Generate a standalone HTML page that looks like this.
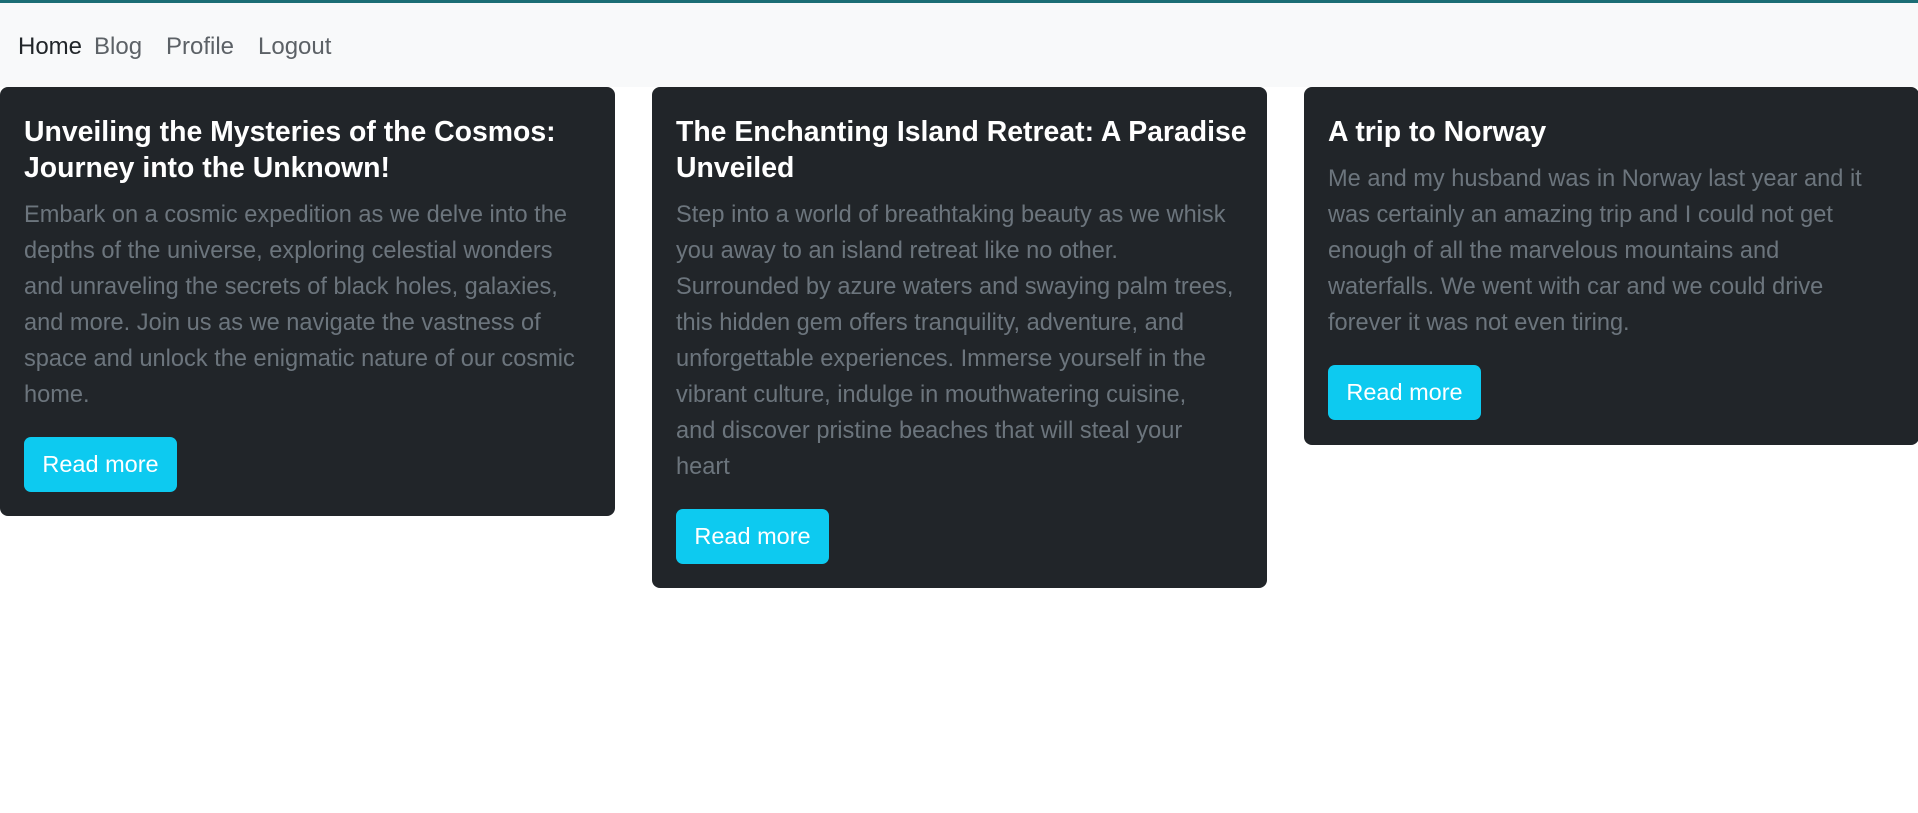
<!DOCTYPE html>
<html><head><meta charset="utf-8"><style>
*{margin:0;padding:0;box-sizing:border-box}
body{width:1918px;height:813px;background:#fff;font-family:"Liberation Sans",sans-serif;position:relative;overflow:hidden}
.top{position:absolute;left:0;top:0;width:1918px;height:3px;background:#1b6d75}
.nav{position:absolute;left:0;top:3px;width:1918px;height:84px;background:#f8f9fa}
.nav span{position:absolute;top:30px;font-size:24px;color:#5c6166}
.card{position:absolute;top:87px;width:615px;background:#212529;border-radius:8px}
.card h5{position:absolute;left:24px;top:27px;color:#fff;font-size:28.4px;font-weight:bold;line-height:36px;white-space:nowrap}
.card p{position:absolute;left:24px;color:#6c757d;font-size:23.6px;line-height:36px;white-space:nowrap}
.btn{position:absolute;left:24px;width:153px;height:55px;background:#0dcaf0;border-radius:7px;color:#fff;font-size:23.5px;line-height:55px;text-align:center}
</style></head><body>
<div class="top"></div>
<div class="nav">
<span style="left:18px;color:#212529">Home</span>
<span style="left:94px">Blog</span>
<span style="left:166px">Profile</span>
<span style="left:258px">Logout</span>
</div>
<div class="card" style="left:0;height:429px">
<h5>Unveiling the Mysteries of the Cosmos:<br>Journey into the Unknown!</h5>
<p style="top:110px">Embark on a cosmic expedition as we delve into the<br>depths of the universe, exploring celestial wonders<br>and unraveling the secrets of black holes, galaxies,<br>and more. Join us as we navigate the vastness of<br>space and unlock the enigmatic nature of our cosmic<br>home.</p>
<div class="btn" style="top:350px">Read more</div>
</div>
<div class="card" style="left:652px;height:501px">
<h5>The Enchanting Island Retreat: A Paradise<br>Unveiled</h5>
<p style="top:110px">Step into a world of breathtaking beauty as we whisk<br>you away to an island retreat like no other.<br>Surrounded by azure waters and swaying palm trees,<br>this hidden gem offers tranquility, adventure, and<br>unforgettable experiences. Immerse yourself in the<br>vibrant culture, indulge in mouthwatering cuisine,<br>and discover pristine beaches that will steal your<br>heart</p>
<div class="btn" style="top:422px">Read more</div>
</div>
<div class="card" style="left:1304px;height:358px">
<h5>A trip to Norway</h5>
<p style="top:74px">Me and my husband was in Norway last year and it<br>was certainly an amazing trip and I could not get<br>enough of all the marvelous mountains and<br>waterfalls. We went with car and we could drive<br>forever it was not even tiring.</p>
<div class="btn" style="top:278px">Read more</div>
</div>
</body></html>
